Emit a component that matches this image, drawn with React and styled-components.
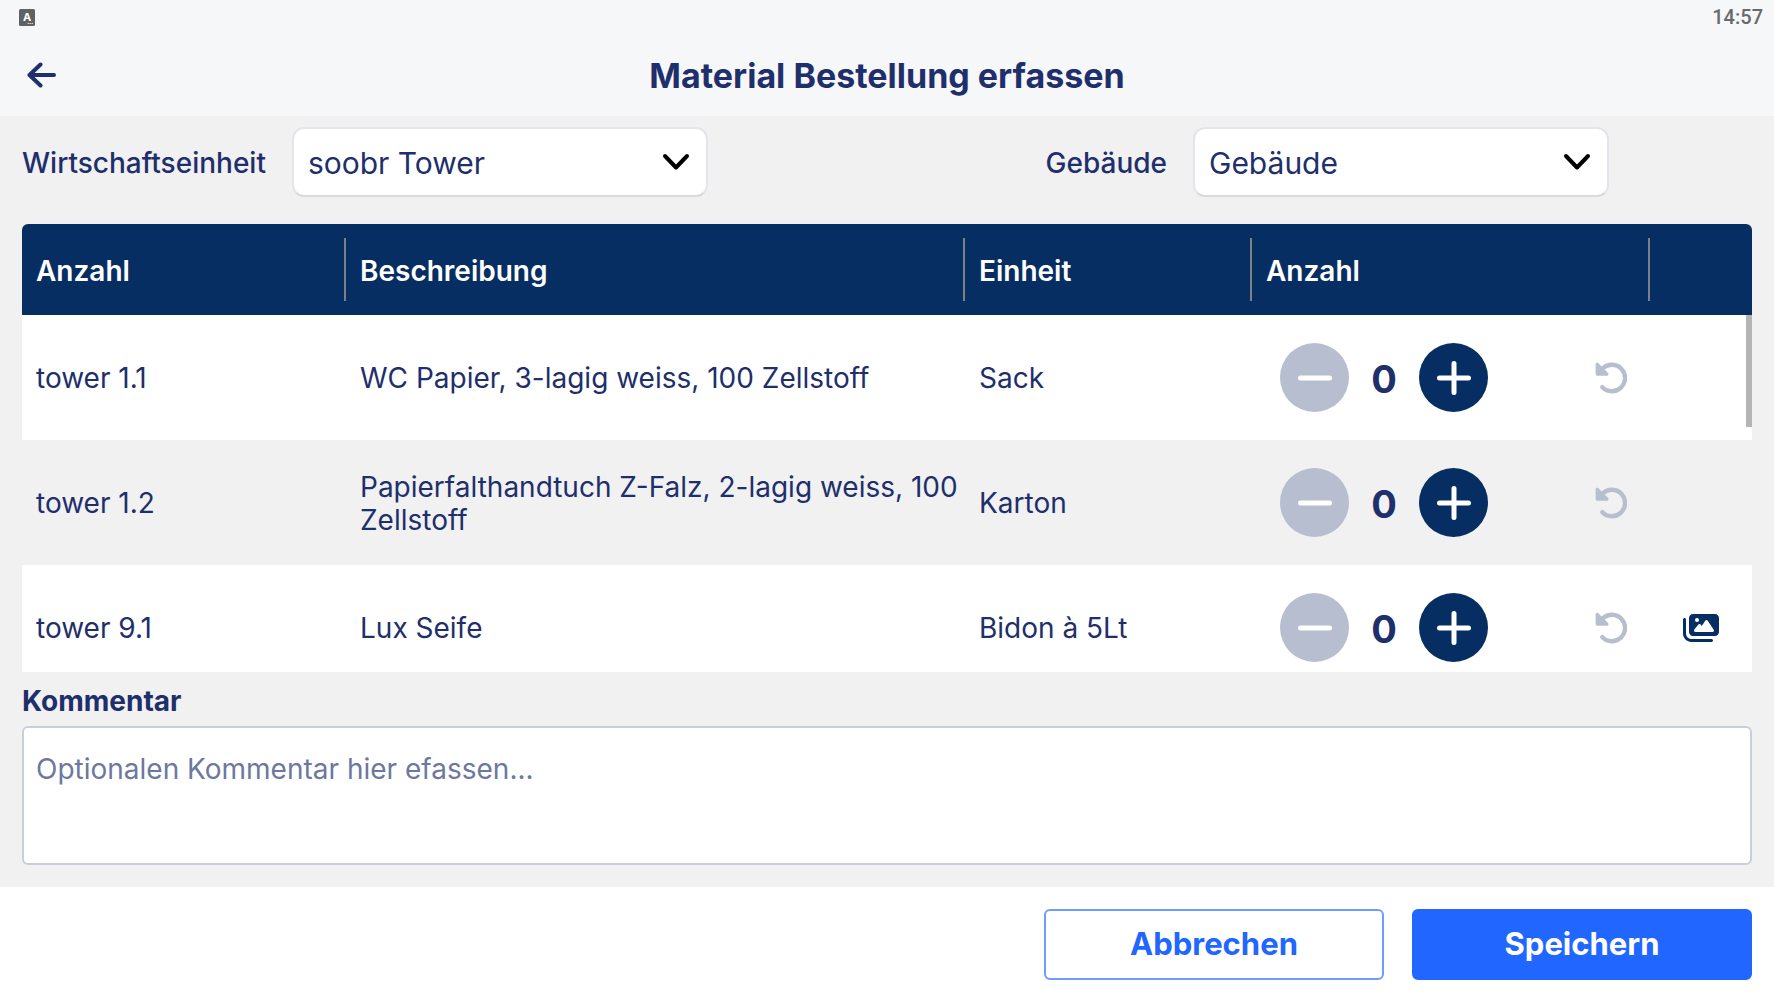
import React, { useState } from 'react';
import styled, { createGlobalStyle, css } from 'styled-components';
import { FaImages } from 'react-icons/fa6';

const color = {
  navy: '#072e62',
  text: '#1e2f6b',
  blue: '#2166ff',
  header: '#f6f7f9',
  page: '#f1f1f1',
  muted: '#b7bed0',
  line: '#c9cedc',
  placeholder: '#6d789f',
};

const materials = [
  { id: 'tower 1.1', title: 'WC Papier, 3-lagig weiss, 100 Zellstoff', unit: 'Sack' },
  { id: 'tower 1.2', title: 'Papierfalthandtuch Z-Falz, 2-lagig weiss, 100 Zellstoff', unit: 'Karton' },
  { id: 'tower 9.1', title: 'Lux Seife', unit: 'Bidon à 5Lt', image: true },
];

const BackIcon = () => (
  <svg width="30" height="26" viewBox="0 0 30 26" fill="none" stroke="currentColor" strokeWidth="4" strokeLinecap="round" strokeLinejoin="round">
    <path d="M27 13H3M13.500 2.500 2.500 13l11 10.500" />
  </svg>
);

const ChevronIcon = () => (
  <svg width="28" height="18" viewBox="0 0 28 18" fill="none" stroke="#000" strokeWidth="4" strokeLinecap="round" strokeLinejoin="round">
    <path d="M3 3 14 14.5 25 3" />
  </svg>
);

const UndoIcon = () => (
  <svg width="32" height="32" viewBox="0 0 32 32" fill="none">
    <path d="M8 6.2A13.2 13.2 0 1 1 7.4 25.2" stroke="currentColor" strokeWidth="4.4" strokeLinecap="round" />
    <path d="M.6 2.400v9.600a1.700 1.700 0 0 0 1.700 1.700h9.600c1.500 0 2.200-1.800 1.200-2.800L3.400 1.200C2.400.200.600.900.600 2.400z" fill="currentColor" />
  </svg>
);

const SignIcon = ({ plus }) => (
  <svg width="34" height="34" viewBox="0 0 34 34" fill="none" stroke="#fff" strokeWidth="5" strokeLinecap="round">
    <path d={plus ? 'M2.500 17h29M17 2.500v29' : 'M2.500 17h29'} />
  </svg>
);

const KeyboardIcon = () => (
  <StatusIcon viewBox="0 0 16 17">
    <rect width="16" height="17" rx="1.500" fill="#5f6163" />
    <text x="8" y="12" textAnchor="middle" fontSize="11" fontWeight="700" fill="#fff">A</text>
    <path d="M8.500 14.500h6" stroke="#fff" strokeDasharray="1.500 .500" strokeOpacity=".7" />
  </StatusIcon>
);

const Filter = ({ id, label, option }) => (
  <FilterBox>
    <FilterLabel htmlFor={id}>{label}</FilterLabel>
    <SelectBox>
      <Select id={id}>
        <option>{option}</option>
      </Select>
      <ChevronIcon />
    </SelectBox>
  </FilterBox>
);

const MaterialRow = ({ id, title, unit, image }) => {
  const [count, setCount] = useState(0);

  return (
    <Row>
      <Cell>{id}</Cell>
      <Cell>{title}</Cell>
      <Cell>{unit}</Cell>
      <ActionCell>
        <CounterBox>
          <RoundButton aria-label="Weniger" disabled={!count} onClick={() => setCount(count - 1)}>
            <SignIcon />
          </RoundButton>
          <Count>{count}</Count>
          <RoundButton aria-label="Mehr" onClick={() => setCount(count + 1)}>
            <SignIcon plus />
          </RoundButton>
          <UndoButton aria-label="Zurücksetzen" disabled={!count} onClick={() => setCount(0)}>
            <UndoIcon />
          </UndoButton>
        </CounterBox>
      </ActionCell>
      <ActionCell>
        {image && (
          <IconButton aria-label="Bilder anzeigen">
            <FaImages size={36} />
          </IconButton>
        )}
      </ActionCell>
    </Row>
  );
};

const App = () => (
  <Page>
    <GlobalStyle />
    <Header>
      <StatusBar>
        <KeyboardIcon />
        <Time>14:57</Time>
      </StatusBar>
      <TitleBar>
        <BackButton aria-label="Zurück">
          <BackIcon />
        </BackButton>
        <Title>Material Bestellung erfassen</Title>
      </TitleBar>
    </Header>
    <Content>
      <Filters>
        <Filter id="unit" label="Wirtschaftseinheit" option="soobr Tower" />
        <Filter id="building" label="Gebäude" option="Gebäude" />
      </Filters>
      <TableBox>
        <TableScroll>
          <Table>
            <colgroup>
              <Col $width={324} />
              <Col />
              <Col $width={287} />
              <Col $width={398} />
              <Col $width={102} />
            </colgroup>
            <thead>
              <tr>
                {['Anzahl', 'Beschreibung', 'Einheit', 'Anzahl', ''].map((name, i) => (
                  <HeadCell key={i}>
                    <HeadLabel>{name}</HeadLabel>
                  </HeadCell>
                ))}
              </tr>
            </thead>
            <tbody>
              {materials.map((item) => (
                <MaterialRow key={item.id} {...item} />
              ))}
            </tbody>
          </Table>
        </TableScroll>
        <ScrollThumb />
      </TableBox>
      <CommentLabel htmlFor="comment">Kommentar</CommentLabel>
      <Comment id="comment" placeholder="Optionalen Kommentar hier efassen..." />
    </Content>
    <Footer>
      <Button>Abbrechen</Button>
      <Button $primary>Speichern</Button>
    </Footer>
  </Page>
);

export default App;

const GlobalStyle = createGlobalStyle`
  * {
    box-sizing: border-box;
  }
  body {
    margin: 0;
    color: ${color.text};
    font-family: Inter, sans-serif;
  }
  button,
  select,
  textarea {
    font-family: inherit;
    color: inherit;
  }
  button {
    padding: 0;
    border: 0;
    background: none;
    cursor: pointer;
  }
  svg {
    display: block;
  }
`;

const flexCenter = css`
  display: flex;
  align-items: center;
`;

const Page = styled.div`
  display: flex;
  flex-direction: column;
  height: 100vh;
  background-color: ${color.page};
`;

const Header = styled.header`
  background-color: ${color.header};
`;

const StatusBar = styled.div`
  ${flexCenter}
  justify-content: space-between;
  height: 34px;
  padding: 0 11px 0 19px;
`;

const StatusIcon = styled.svg`
  width: 16px;
  height: 17px;
`;

const Time = styled.span`
  font-family: Roboto, sans-serif;
  font-size: 20px;
  font-weight: 500;
  color: #67696b;
`;

const TitleBar = styled.div`
  display: grid;
  grid-template-columns: 60px 1fr 60px;
  align-items: center;
  height: 82px;
`;

const BackButton = styled.button`
  ${flexCenter}
  height: 60px;
  padding-left: 27px;
`;

const Title = styled.h1`
  margin: 0;
  font-size: 34px;
  font-weight: 700;
  text-align: center;
`;

const Content = styled.main`
  display: flex;
  flex-direction: column;
  flex: 1;
  min-height: 0;
  padding: 11px 22px 22px;
`;

const Filters = styled.div`
  display: flex;
  justify-content: space-between;
  padding-right: 143px;
  margin-bottom: 27px;
`;

const FilterBox = styled.div`
  ${flexCenter}
  gap: 26px;
`;

const FilterLabel = styled.label`
  padding-top: 2px;
  font-size: 28px;
  font-weight: 500;
`;

const SelectBox = styled.div`
  display: grid;
  align-items: center;
  width: 416px;
  & > * {
    grid-area: 1 / 1;
  }
  & > svg {
    justify-self: end;
    margin-right: 18px;
    pointer-events: none;
  }
`;

const Select = styled.select`
  appearance: none;
  width: 100%;
  height: 70px;
  padding: 2px 14px 0;
  border: 2px solid #e4e5ea;
  border-bottom-color: #d8d9dd;
  border-radius: 12px;
  background-color: #fff;
  font-size: 30px;
`;

const TableBox = styled.div`
  position: relative;
  flex: 1;
  min-height: 0;
  border-radius: 6px 6px 0 0;
  overflow: hidden;
`;

const TableScroll = styled.div`
  height: 100%;
  overflow-y: auto;
  scrollbar-width: none;
`;

const ScrollThumb = styled.div`
  position: absolute;
  top: 91px;
  right: 0;
  width: 6px;
  height: 25%;
  background-color: #b5b5b5;
`;

const Table = styled.table`
  width: 100%;
  table-layout: fixed;
  border-collapse: collapse;
`;

const Col = styled.col`
  width: ${({ $width }) => ($width ? `${$width}px` : 'auto')};
`;

const HeadCell = styled.th`
  position: sticky;
  top: 0;
  z-index: 1;
  height: 91px;
  padding: 0;
  background-color: ${color.navy};
  color: #fff;
  font-size: 28px;
  font-weight: 600;
  text-align: left;
`;

const HeadLabel = styled.div`
  ${flexCenter}
  height: 63px;
  padding: 2px 14px 0;
  ${HeadCell}:not(:last-child) > & {
    border-right: 2px solid #7c8087;
  }
`;

const Row = styled.tr`
  height: 125px;
  background-color: #fff;
  &:nth-child(even) {
    background-color: ${color.page};
  }
`;

const Cell = styled.td`
  padding: 2px 0 0 14px;
  font-size: 28px;
  line-height: 33px;
`;

const ActionCell = styled.td`
  padding: 0;
`;

const CounterBox = styled.div`
  ${flexCenter}
  padding-left: 28px;
`;

const RoundButton = styled.button`
  ${flexCenter}
  justify-content: center;
  width: 69px;
  height: 69px;
  border-radius: 50%;
  background-color: ${color.navy};
  &:disabled {
    background-color: ${color.muted};
  }
`;

const Count = styled.span`
  width: 70px;
  padding-top: 3px;
  font-size: 38px;
  font-weight: 700;
  text-align: center;
`;

const UndoButton = styled.button`
  margin-left: auto;
  margin-right: 23px;
  color: ${color.navy};
  &:disabled {
    color: ${color.muted};
  }
`;

const IconButton = styled.button`
  display: block;
  margin: 0 auto;
  color: ${color.navy};
`;

const CommentLabel = styled.label`
  padding: 13px 0 8px;
  font-size: 28px;
  font-weight: 700;
  line-height: 33px;
`;

const Comment = styled.textarea`
  height: 139px;
  padding: 24px 12px;
  border: 2px solid ${color.line};
  border-radius: 6px;
  background-color: #fff;
  font-size: 28px;
  line-height: 34px;
  resize: none;
  &::placeholder {
    color: ${color.placeholder};
  }
`;

const Footer = styled.footer`
  display: flex;
  justify-content: flex-end;
  gap: 28px;
  padding: 22px 22px 18px;
  background-color: #fff;
`;

const Button = styled.button`
  width: 340px;
  height: 71px;
  padding-bottom: 3px;
  border: 2px solid ${({ $primary }) => ($primary ? color.blue : '#6f9cff')};
  border-radius: 6px;
  background-color: ${({ $primary }) => ($primary ? color.blue : '#fff')};
  color: ${({ $primary }) => ($primary ? '#fff' : color.blue)};
  font-size: 31px;
  font-weight: 700;
`;
